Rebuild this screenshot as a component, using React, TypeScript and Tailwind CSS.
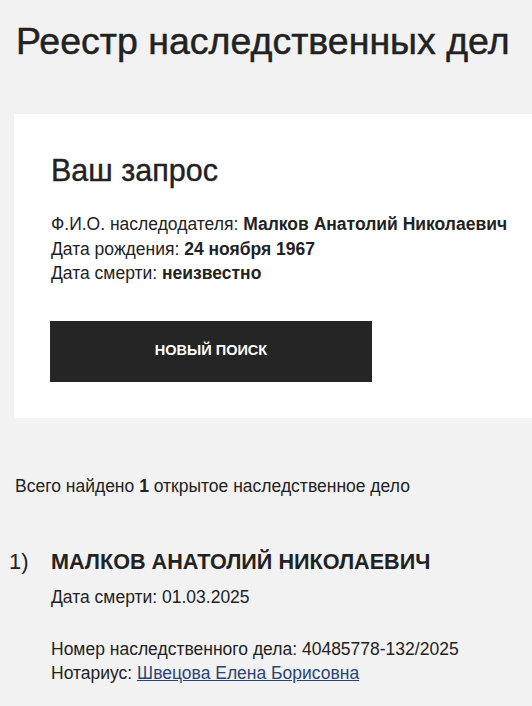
import React from 'react'

const App = () => {
  return (
    <div
      className="min-h-[706px] overflow-hidden bg-[#f2f2f2] pl-[14px] text-[#222222]"
      style={{ fontFamily: '"Liberation Sans", Arial, sans-serif' }}
    >
      <h1 className="pt-[20px] pl-[2px] text-[37.5px] leading-[42px] whitespace-nowrap [-webkit-text-stroke:0.5px_#222222]">
        Реестр наследственных дел
      </h1>

      <div className="mt-[52px] h-[304px] w-[560px] bg-white pt-[37px] pl-[37px]">
        <h2 className="text-[30.5px] leading-[38px] [-webkit-text-stroke:0.4px_#222222]">Ваш запрос</h2>
        <div className="mt-[23px] text-[17.5px] leading-[24.5px] whitespace-nowrap">
          <div>
            Ф.И.О. наследодателя: <b>Малков Анатолий Николаевич</b>
          </div>
          <div>
            Дата рождения: <b>24 ноября 1967</b>
          </div>
          <div>
            Дата смерти: <b>неизвестно</b>
          </div>
        </div>
        <button className="mt-[35px] ml-[-1px] flex h-[61px] w-[322px] items-center justify-center bg-[#252525] text-[14.5px] font-bold text-white">
          НОВЫЙ ПОИСК
        </button>
      </div>

      <p className="mt-[56px] pl-[1px] text-[17.5px] leading-[24px]">
        Всего найдено <b>1</b> открытое наследственное дело
      </p>

      <div className="mt-[50px] flex">
        <div className="w-[37px] text-[22px] leading-[28px]">
          <span className="ml-[-5px]">1)</span>
        </div>
        <div>
          <div className="text-[21.6px] font-bold leading-[28px]">МАЛКОВ АНАТОЛИЙ НИКОЛАЕВИЧ</div>
          <div className="mt-[9px] text-[17.5px] leading-[24px]">Дата смерти: 01.03.2025</div>
          <div className="mt-[28px] text-[17.5px] leading-[24px]">
            Номер наследственного дела: 40485778-132/2025
          </div>
          <div className="text-[17.5px] leading-[24px]">
            Нотариус:{' '}
            <a href="#" className="text-[#2a4574] underline">
              Швецова Елена Борисовна
            </a>
          </div>
        </div>
      </div>
    </div>
  )
}

export default App
